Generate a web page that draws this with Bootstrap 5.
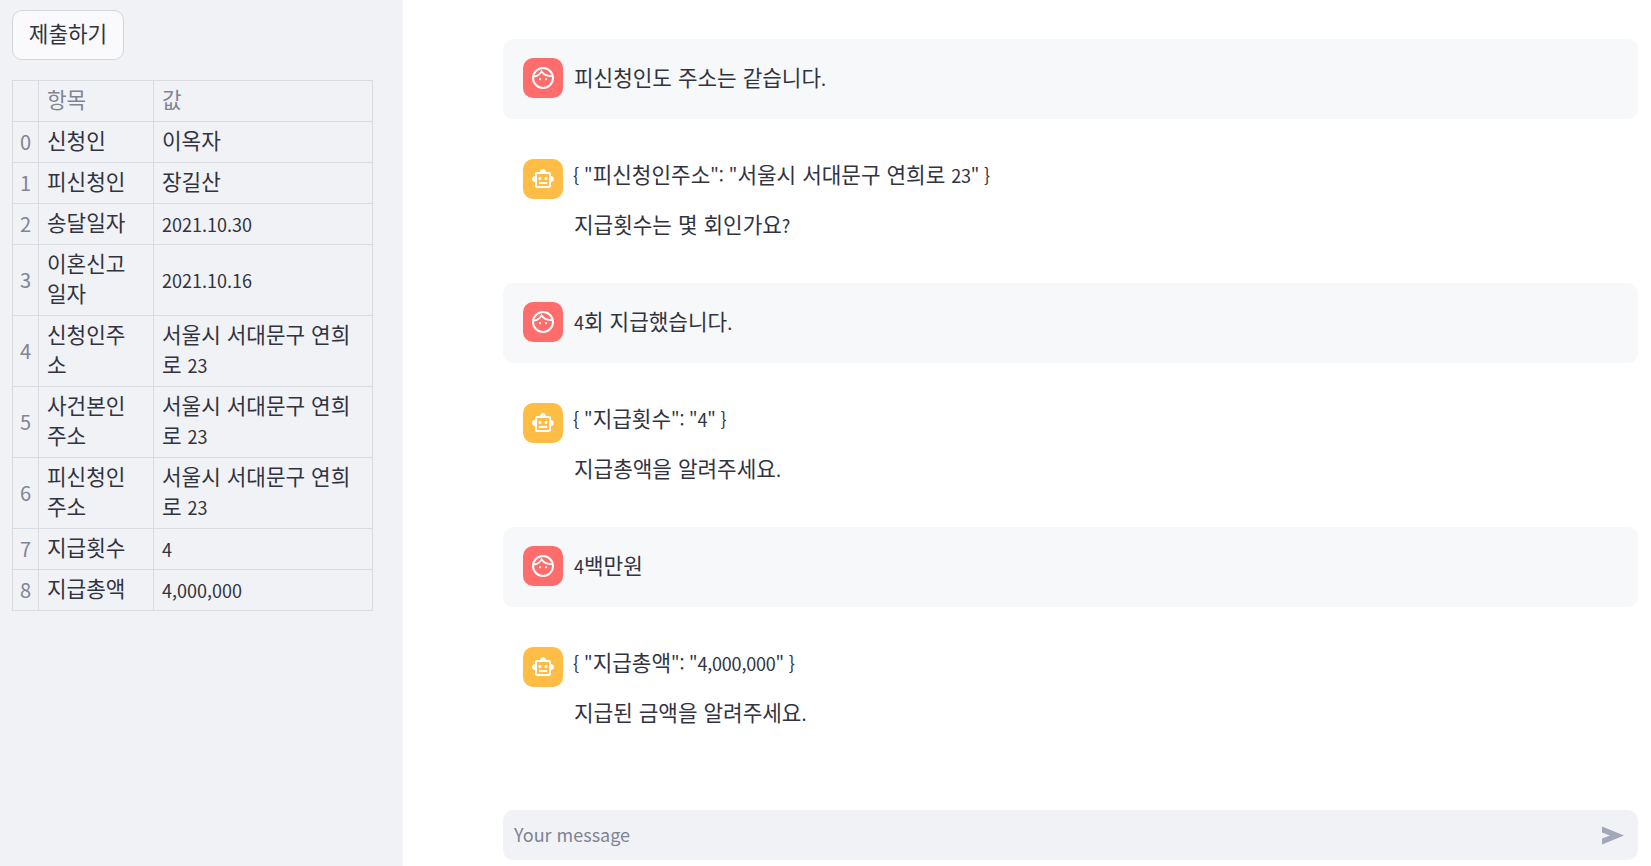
<!DOCTYPE html>
<html lang="ko">

<head>
    <meta charset="UTF-8">
    <meta name="viewport" content="width=device-width, initial-scale=1.0">
    <title>Chat</title>
    <link href="https://cdn.jsdelivr.net/npm/bootstrap@5.3.0/dist/css/bootstrap.min.css" rel="stylesheet">
    <style>
        html, body { height: 100%; overflow: hidden; }
        body { font-family: "Noto Sans CJK KR", "Noto Sans", sans-serif; color: #31333f; background: #fff; }
        .lat { font-size: 18px; line-height: 1; }
        .side-panel { width: 403px; flex: none; height: 866px; background: #f0f2f6; padding: 10px 30px 0 12px; }
        .submit-btn { width: 112px; height: 50px; padding: 0 0 5px; font-size: 21.3px; color: #31333f; background: #fafafd; border: 1px solid #d5d6da; border-radius: 10px; display: block; }
        .data-grid { margin: 20px 0 0; width: 361px; table-layout: fixed; border-collapse: collapse; font-size: 21.3px; line-height: 30px; }
        .data-grid th, .data-grid td { border: 1px solid #d9dbe0; padding: 3px 8px 7px; font-weight: 400; vertical-align: middle; background: transparent; color: #31333f; }
        .data-grid thead th { color: #808495; height: 41px; }
        .data-grid tbody tr { height: 41px; }
        .data-grid td.lat { padding: 5px 8px; line-height: 30px; }
        .data-grid .row-idx { color: #808495; padding: 0; text-align: center; width: 26px; font-size: 20px; }
        .data-grid td.row-idx { padding: 0; }
        .data-grid .col-key { width: 115px; }
        .data-grid td.key-cell { padding-right: 12px; }
        .chat-pane { min-width: 0; height: 866px; padding: 39px 13px 6px 100px; }
        .chat-msg { display: flex; gap: 11px; padding: 19px 20px; border-radius: 10px; margin-bottom: 20px; font-size: 21.3px; line-height: 30px; }
        .chat-user { background: #f7f8fa; height: 80px; }
        .chat-bot { height: 124px; padding-top: 20px; }
        .chat-avatar { width: 40px; height: 40px; flex: none; border-radius: 10px; display: flex; align-items: center; justify-content: center; }
        .avatar-user { background: #ff6c6c; }
        .avatar-bot { background: #ffbd45; }
        .msg-text { padding-top: 4px; }
        .msg-json { margin-bottom: 20px; margin-top: -4px; margin-left: -1px; }
        .json-tail { letter-spacing: -.2px; }
        .chat-input { height: 50px; background: #f0f2f6; border-radius: 10px; padding: 0 14px 0 11px; font-size: 18px; color: #7f8390; }
        .input-hint { padding-bottom: 2px; }
    </style>
</head>

<body>
    <svg class="d-none">
        <symbol id="face-icon" viewBox="0 0 24 24">
            <g fill="none" stroke="#fff" stroke-width="2"><circle cx="12" cy="12" r="10"/><path stroke-width="1.8" d="M2.800 10.500c3.500-.3 6-2 7.700-5.200 2 3.400 5.500 5.200 10.700 4.600"/></g>
            <circle cx="9" cy="13.200" r="1.100" fill="#fff"/><circle cx="15" cy="13.200" r="1.100" fill="#fff"/>
        </symbol>
        <symbol id="bot-icon" viewBox="0 0 24 24">
            <path fill="#fff" d="M20 9V7c0-1.100-.9-2-2-2h-3c0-1.660-1.340-3-3-3S9 3.340 9 5H6c-1.100 0-2 .9-2 2v2c-1.660 0-3 1.340-3 3s1.340 3 3 3v4c0 1.100.9 2 2 2h12c1.100 0 2-.9 2-2v-4c1.660 0 3-1.340 3-3s-1.340-3-3-3zm-2 10H6V7h12v12zm-9-6c-.83 0-1.500-.67-1.500-1.500S8.170 10 9 10s1.500.67 1.500 1.500S9.830 13 9 13zm7.500-1.500c0 .83-.67 1.500-1.500 1.500s-1.500-.67-1.500-1.500.67-1.500 1.500-1.500 1.500.67 1.500 1.500zM8 15h8v2H8v-2z"/>
        </symbol>
    </svg>

    <div class="d-flex">
        <!-- Sidebar -->
        <div class="side-panel">
            <button type="button" class="submit-btn">제출하기</button>
            <table class="data-grid">
                <thead>
                    <tr><th class="row-idx"></th><th class="col-key">항목</th><th>값</th></tr>
                </thead>
                <tbody>
                    <tr><td class="row-idx">0</td><td class="key-cell">신청인</td><td>이옥자</td></tr>
                    <tr><td class="row-idx">1</td><td class="key-cell">피신청인</td><td>장길산</td></tr>
                    <tr><td class="row-idx">2</td><td class="key-cell">송달일자</td><td class="lat">2021.10.30</td></tr>
                    <tr><td class="row-idx">3</td><td class="key-cell">이혼신고일자</td><td class="lat">2021.10.16</td></tr>
                    <tr><td class="row-idx">4</td><td class="key-cell">신청인주소</td><td>서울시 서대문구 연희<span>로 </span><span class="lat">23</span></td></tr>
                    <tr><td class="row-idx">5</td><td class="key-cell">사건본인주소</td><td>서울시 서대문구 연희<span>로 </span><span class="lat">23</span></td></tr>
                    <tr><td class="row-idx">6</td><td class="key-cell">피신청인주소</td><td>서울시 서대문구 연희<span>로 </span><span class="lat">23</span></td></tr>
                    <tr><td class="row-idx">7</td><td class="key-cell">지급횟수</td><td class="lat">4</td></tr>
                    <tr><td class="row-idx">8</td><td class="key-cell">지급총액</td><td class="lat">4,000,000</td></tr>
                </tbody>
            </table>
        </div>

        <!-- Chat -->
        <div class="chat-pane flex-grow-1 d-flex flex-column">
            <div class="flex-grow-1">
                <div class="chat-msg chat-user">
                    <div class="chat-avatar avatar-user"><svg width="24" height="24"><use href="#face-icon"/></svg></div>
                    <div class="msg-text">피신청인도 주소는 같습니다<span class="lat">.</span></div>
                </div>
                <div class="chat-msg chat-bot">
                    <div class="chat-avatar avatar-bot"><svg width="24" height="24"><use href="#bot-icon"/></svg></div>
                    <div class="msg-text">
                        <div class="msg-json"><span class="lat">{ "</span>피신청인주소<span class="lat">": "</span>서울시 서대문구 연희로 <span class="lat json-tail">23" }</span></div>
                        <div>지급횟수는 몇 회인가요<span class="lat">?</span></div>
                    </div>
                </div>
                <div class="chat-msg chat-user">
                    <div class="chat-avatar avatar-user"><svg width="24" height="24"><use href="#face-icon"/></svg></div>
                    <div class="msg-text"><span class="lat">4</span>회 지급했습니다<span class="lat">.</span></div>
                </div>
                <div class="chat-msg chat-bot">
                    <div class="chat-avatar avatar-bot"><svg width="24" height="24"><use href="#bot-icon"/></svg></div>
                    <div class="msg-text">
                        <div class="msg-json"><span class="lat">{ "</span>지급횟수<span class="lat json-tail">": "4" }</span></div>
                        <div>지급총액을 알려주세요<span class="lat">.</span></div>
                    </div>
                </div>
                <div class="chat-msg chat-user">
                    <div class="chat-avatar avatar-user"><svg width="24" height="24"><use href="#face-icon"/></svg></div>
                    <div class="msg-text"><span class="lat">4</span>백만원</div>
                </div>
                <div class="chat-msg chat-bot">
                    <div class="chat-avatar avatar-bot"><svg width="24" height="24"><use href="#bot-icon"/></svg></div>
                    <div class="msg-text">
                        <div class="msg-json"><span class="lat">{ "</span>지급총액<span class="lat json-tail">": "4,000,000" }</span></div>
                        <div>지급된 금액을 알려주세요<span class="lat">.</span></div>
                    </div>
                </div>
            </div>
            <div class="chat-input d-flex align-items-center justify-content-between">
                <span class="input-hint">Your message</span>
                <svg width="22" height="19" viewBox="0 0 22 19" fill="#a3a8b8"><path d="M0 .5 22 9.500 0 18.500V12.500L8 9.500 0 6.500z"/></svg>
            </div>
        </div>
    </div>
    <script src="https://cdn.jsdelivr.net/npm/bootstrap@5.3.0/dist/js/bootstrap.bundle.min.js"></script>
</body>

</html>
